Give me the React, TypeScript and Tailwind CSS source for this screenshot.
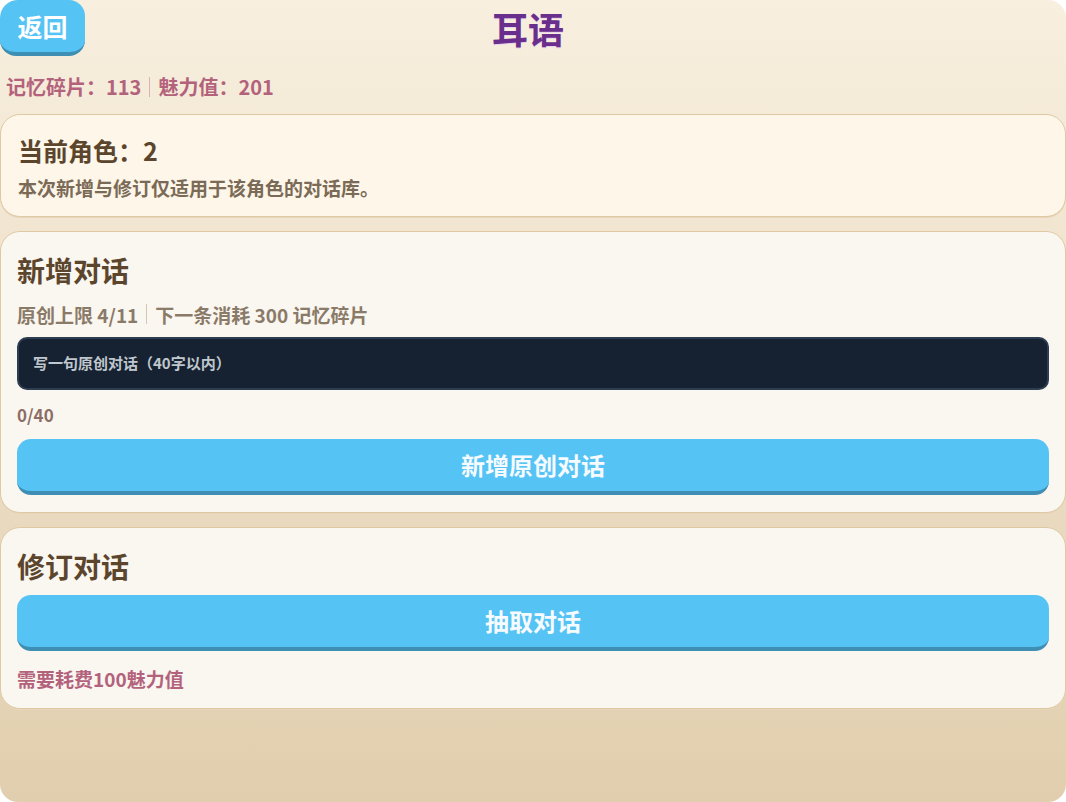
const font = { fontFamily: '"Noto Sans CJK SC", "Noto Sans", sans-serif' };

const Divider = ({ color }: { color: string }) => (
  <span className={`mx-[8px] inline-block h-[20px] w-px align-middle ${color}`}></span>
);

const App = () => {
  return (
    <div className="w-full h-[802px] bg-white" style={font}>
      <div className="relative w-full h-full rounded-[18px] overflow-hidden bg-gradient-to-b from-[#f8efdf] to-[#e1ceae] flex flex-col">
        {/* Header */}
        <div className="grid grid-cols-[85px_1fr_95px] items-start h-[58px]">
          <button className="h-[56px] w-[85px] rounded-[16px] bg-[#56c3f5] border-b-4 border-[#3f8fb4] text-white text-[25px] font-bold leading-none">
            返回
          </button>
          <h1 className="text-center text-[36px] font-bold text-[#6a2f8c] leading-[57px] [text-shadow:0_1px_0_#e9d2ee]">
            耳语
          </h1>
          <div></div>
        </div>

        {/* Currency */}
        <div className="px-[6px] mt-[16px] h-[26px] flex items-center text-[20px] font-bold text-[#b3627c] leading-none">
          <span>记忆碎片：113</span>
          <Divider color="bg-[#dcb0b8]" />
          <span>魅力值：201</span>
        </div>

        {/* Current role */}
        <section className="mt-[14px] rounded-[20px] border border-[#dfc9a5] bg-[#fdf6e9] px-[17px] pt-[17px] pb-[14px] shadow-[0_1px_0_#e7d6bb]">
          <h2 className="text-[25px] font-bold text-[#5b452c] leading-[36px]">当前角色：2</h2>
          <p className="mt-[6px] text-[19px] font-bold text-[#7b6a56] leading-[28px]">
            本次新增与修订仅适用于该角色的对话库。
          </p>
        </section>

        {/* New dialogue */}
        <section className="mt-[14px] rounded-[20px] border border-[#dfc9a5] bg-[#faf6f0] px-[16px] pt-[20px] pb-[17px] flex flex-col shadow-[0_1px_0_#e7d6bb]">
          <h2 className="text-[28px] font-bold text-[#5b452c] leading-[36px]">新增对话</h2>
          <div className="mt-[14px] h-[24px] flex items-center text-[19px] font-bold text-[#8a7a68] leading-none">
            <span>原创上限 4/11</span>
            <Divider color="bg-[#d6c6b4]" />
            <span>下一条消耗 300 记忆碎片</span>
          </div>
          <div className="mt-[11px] h-[53px] rounded-[10px] border-2 border-[#2d3e52] bg-[#162231] px-[14px] flex items-center">
            <span className="text-[15px] font-bold text-[#bfc6cd]">写一句原创对话（40字以内）</span>
          </div>
          <div className="mt-[13px] text-[17px] font-bold text-[#8c6e66] leading-[24px]">0/40</div>
          <button className="mt-[12px] h-[56px] rounded-[14px] bg-[#56c3f5] border-b-4 border-[#3f8fb4] text-[24px] font-bold text-[#f6fbff]">
            新增原创对话
          </button>
        </section>

        {/* Revise dialogue */}
        <section className="mt-[14px] rounded-[20px] border border-[#dfc9a5] bg-[#faf6f0] px-[16px] pt-[20px] pb-[17px] flex flex-col shadow-[0_1px_0_#e7d6bb]">
          <h2 className="text-[28px] font-bold text-[#5b452c] leading-[36px]">修订对话</h2>
          <button className="mt-[11px] h-[56px] rounded-[14px] bg-[#56c3f5] border-b-4 border-[#3f8fb4] text-[24px] font-bold text-[#f6fbff]">
            抽取对话
          </button>
          <p className="mt-[16px] text-[19px] font-bold text-[#b3627c] leading-[24px]">需要耗费100魅力值</p>
        </section>
      </div>
    </div>
  );
};

export default App;
